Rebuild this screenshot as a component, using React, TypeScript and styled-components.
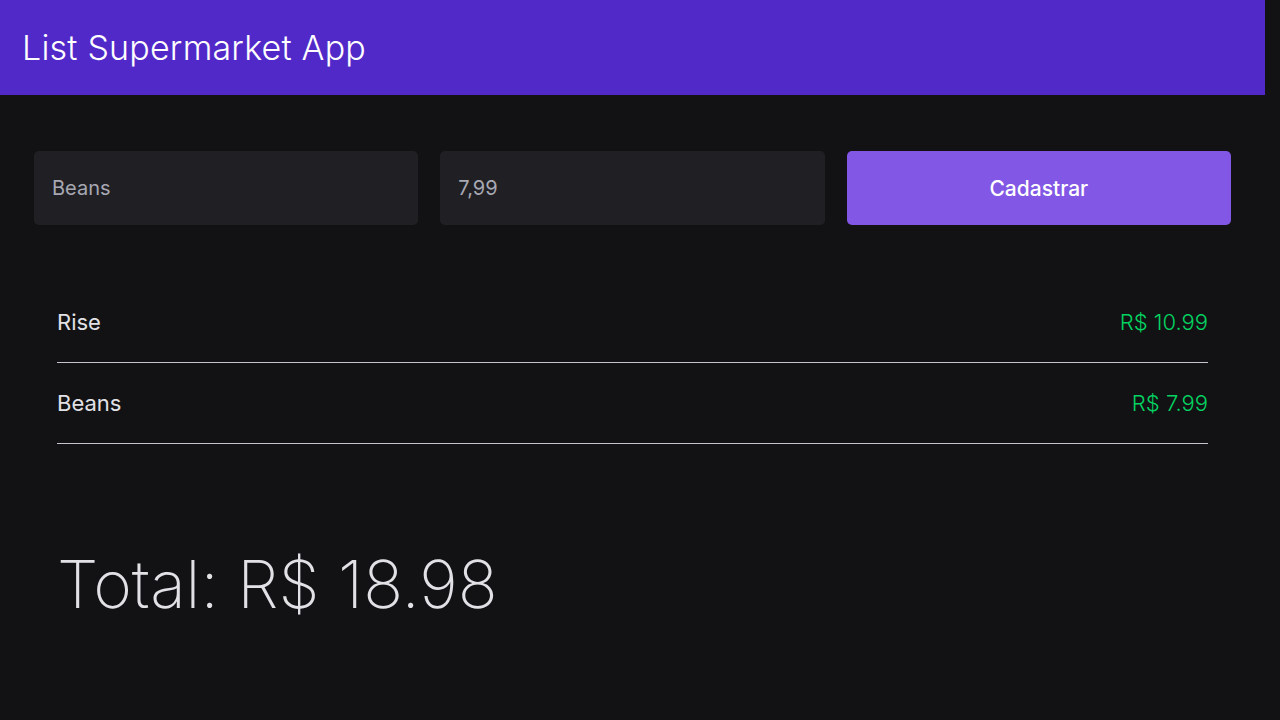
import React, { useState } from "react";
import styled, { createGlobalStyle } from "styled-components";

const GlobalStyle = createGlobalStyle`
  * { box-sizing: border-box; margin: 0; padding: 0; }
  html { overflow-y: scroll; }
  body {
    background: #121214;
    color: #e1e1e6;
    font-family: Inter, "Noto Sans", sans-serif;
    -webkit-font-smoothing: antialiased;
  }
  #root { width: calc(100vw - 15px); }
`;

const Header = styled.header`
  height: 95px;
  background: #5129c9;
  display: flex;
  align-items: center;
  padding: 0 22px;
`;

const Title = styled.h1`
  font-size: 34px;
  font-weight: 300;
  color: #ffffff;
  letter-spacing: 0.2px;
`;

const Main = styled.main`
  padding: 56px 34px 456px;
`;

const Form = styled.form`
  display: grid;
  grid-template-columns: repeat(3, 1fr);
  gap: 22px;
`;

const Input = styled.input`
  height: 74px;
  border: 0;
  border-radius: 5px;
  background: #202024;
  color: #a8a8b3;
  padding: 0 18px;
  font-family: inherit;
  font-size: 20px;
  outline: none;
`;

const Button = styled.button`
  height: 74px;
  border: 0;
  border-radius: 5px;
  background: #8257e5;
  color: #ffffff;
  font-family: inherit;
  font-size: 21px;
  font-weight: 500;
  cursor: pointer;
`;

const List = styled.ul`
  list-style: none;
  margin: 57px 23px 0;
`;

const Item = styled.li`
  height: 81px;
  display: flex;
  align-items: center;
  justify-content: space-between;
  border-bottom: 1px solid #c4c4cc;
`;

const Name = styled.span`
  font-size: 22px;
  color: #e1e1e6;
`;

const Price = styled.span`
  font-size: 22px;
  font-weight: 300;
  color: #04d361;
`;

const Total = styled.h2`
  margin: 107px 23px 0;
  font-size: 66px;
  font-weight: 200;
  line-height: 1;
  color: #e1e1e6;
`;

type Product = { name: string; price: number };

const App = () => {
  const [products] = useState<Product[]>([
    { name: "Rise", price: 10.99 },
    { name: "Beans", price: 7.99 },
  ]);
  const [name, setName] = useState("Beans");
  const [price, setPrice] = useState("7,99");

  const total = products.reduce((sum, p) => sum + p.price, 0);

  return (
    <>
      <GlobalStyle />
      <Header>
        <Title>List Supermarket App</Title>
      </Header>
      <Main>
        <Form onSubmit={(e) => e.preventDefault()}>
          <Input value={name} onChange={(e) => setName(e.target.value)} />
          <Input value={price} onChange={(e) => setPrice(e.target.value)} />
          <Button type="submit">Cadastrar</Button>
        </Form>
        <List>
          {products.map((p) => (
            <Item key={p.name}>
              <Name>{p.name}</Name>
              <Price>R$ {p.price.toFixed(2)}</Price>
            </Item>
          ))}
        </List>
        <Total>Total: R$ {total.toFixed(2)}</Total>
      </Main>
    </>
  );
};

export default App;
